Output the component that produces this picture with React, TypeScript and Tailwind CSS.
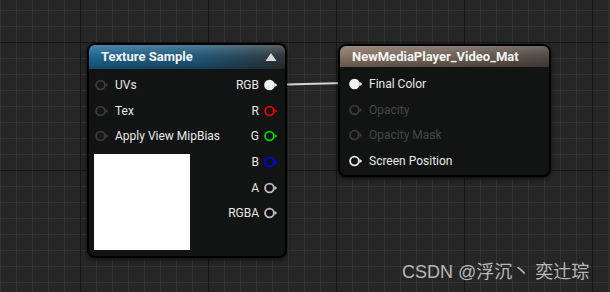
import React from "react";

type PinKind = "white" | "whiteOutline" | "red" | "green" | "blue" | "gray" | "dark" | "faded";

const pinColors: Record<PinKind, { stroke: string; fill: string }> = {
  white: { stroke: "#f2f2f2", fill: "#f2f2f2" },
  whiteOutline: { stroke: "#e6e6e6", fill: "#111" },
  red: { stroke: "#e00000", fill: "#111" },
  green: { stroke: "#00d000", fill: "#111" },
  blue: { stroke: "#0000f0", fill: "#111" },
  gray: { stroke: "#bdbdbd", fill: "#111" },
  dark: { stroke: "#3a3a3a", fill: "#151515" },
  faded: { stroke: "#3a3a3a", fill: "#141414" },
};

function Pin({ kind }: { kind: PinKind }) {
  const c = pinColors[kind];
  return (
    <svg width="14" height="12" viewBox="0 0 14 12" className="shrink-0">
      <circle cx="5.5" cy="6" r="4.4" fill={c.fill} stroke={c.stroke} strokeWidth="1.9" />
      <polygon points="10.6,3.7 13.2,6 10.6,8.3" fill={c.stroke} />
    </svg>
  );
}

const font = { fontFamily: "Roboto, 'Noto Sans', sans-serif" };

function LeftRow({ label }: { label: string }) {
  return (
    <div className="flex h-[25.7px] items-center gap-[6px]">
      <Pin kind="dark" />
      <span className="text-[12px] text-[#e8e8e8]">{label}</span>
    </div>
  );
}

function RightRow({ label, kind }: { label: string; kind: PinKind }) {
  return (
    <div className="flex h-[25.7px] items-center justify-end gap-[5px]">
      <span className="text-[12px] text-[#e8e8e8]">{label}</span>
      <Pin kind={kind} />
    </div>
  );
}

function OutRow({ label, kind, dim }: { label: string; kind: PinKind; dim?: boolean }) {
  return (
    <div className="flex h-[25.8px] items-center gap-[6px]">
      <Pin kind={kind} />
      <span className={"text-[12px] " + (dim ? "text-[#474747]" : "text-[#e8e8e8]")}>{label}</span>
    </div>
  );
}

export default function App() {
  return (
    <div
      className="relative h-[292px] w-[610px] overflow-hidden bg-[#262626]"
      style={font}
    >
      {/* grid */}
      <div className="absolute inset-0 bg-[linear-gradient(to_right,#333333_1px,transparent_1px),linear-gradient(to_bottom,#333333_1px,transparent_1px)] bg-[size:16px_16px] bg-[position:0px_10px]" />
      <div className="absolute inset-0 bg-[linear-gradient(to_right,#151515_1px,transparent_1px),linear-gradient(to_bottom,#151515_1px,transparent_1px)] bg-[size:128px_128px] bg-[position:80px_42px]" />

      {/* wire */}
      <svg className="absolute left-0 top-0" width="610" height="292">
        <path d="M 280 84.5 C 310 84.5, 320 83, 352 83" stroke="#d4d4d4" strokeWidth="1.8" fill="none" />
      </svg>

      {/* Texture Sample node */}
      <div className="absolute left-[87px] top-[43px] flex h-[215px] w-[200px] flex-col overflow-hidden rounded-[8px] border-2 border-black bg-[#121413] shadow-[0_2px_4px_rgba(0,0,0,0.6)]">
        <div className="relative flex h-[24px] shrink-0 items-center justify-between bg-[linear-gradient(to_right,#1a6490,#1e5577_55%,#2b3438)] pl-[12px] pr-[8px]">
          <div className="absolute inset-0 bg-[linear-gradient(to_bottom,rgba(255,255,255,0.22),rgba(255,255,255,0.02)_45%,rgba(0,0,0,0.25))]" />
          <span className="relative text-[13px] font-bold text-[#f4f4f4]">Texture Sample</span>
          <svg className="relative" width="12" height="10" viewBox="0 0 12 10">
            <polygon points="6,1 11.5,9 0.5,9" fill="#d8d8d8" />
          </svg>
        </div>
        <div className="flex flex-1 justify-between pl-[6px] pr-[7px] pt-[3px]">
          <div className="flex flex-col">
            <LeftRow label="UVs" />
            <LeftRow label="Tex" />
            <LeftRow label="Apply View MipBias" />
            <div className="ml-[-1px] mt-[5px] h-[96px] w-[96px] bg-white" />
          </div>
          <div className="flex flex-col">
            <RightRow label="RGB" kind="white" />
            <RightRow label="R" kind="red" />
            <RightRow label="G" kind="green" />
            <RightRow label="B" kind="blue" />
            <RightRow label="A" kind="gray" />
            <RightRow label="RGBA" kind="gray" />
          </div>
        </div>
      </div>

      {/* Material node */}
      <div className="absolute left-[338px] top-[44px] flex h-[133px] w-[213px] flex-col overflow-hidden rounded-[8px] border-2 border-black bg-[#121413] shadow-[0_2px_4px_rgba(0,0,0,0.6)]">
        <div className="relative flex h-[21px] shrink-0 items-center bg-[linear-gradient(to_right,#857262,#6a5d52_60%,#4e4742)] pl-[12px]">
          <div className="absolute inset-0 bg-[linear-gradient(to_bottom,rgba(255,255,255,0.18),rgba(255,255,255,0.02)_45%,rgba(0,0,0,0.25))]" />
          <span className="relative text-[13px] font-bold text-[#f4f4f4]">NewMediaPlayer_Video_Mat</span>
        </div>
        <div className="flex flex-col pl-[9px] pt-[4px]">
          <OutRow label="Final Color" kind="white" />
          <OutRow label="Opacity" kind="faded" dim />
          <OutRow label="Opacity Mask" kind="faded" dim />
          <OutRow label="Screen Position" kind="whiteOutline" />
        </div>
      </div>

      {/* watermark */}
      <div
        className="absolute left-[402px] top-[260px] text-[18px] leading-[24px] text-[#b8b8b8]"
        style={{ fontFamily: "'Liberation Sans', 'Noto Sans CJK SC', sans-serif" }}
      >
        CSDN @浮沉丶 奕辻琮
      </div>
    </div>
  );
}
